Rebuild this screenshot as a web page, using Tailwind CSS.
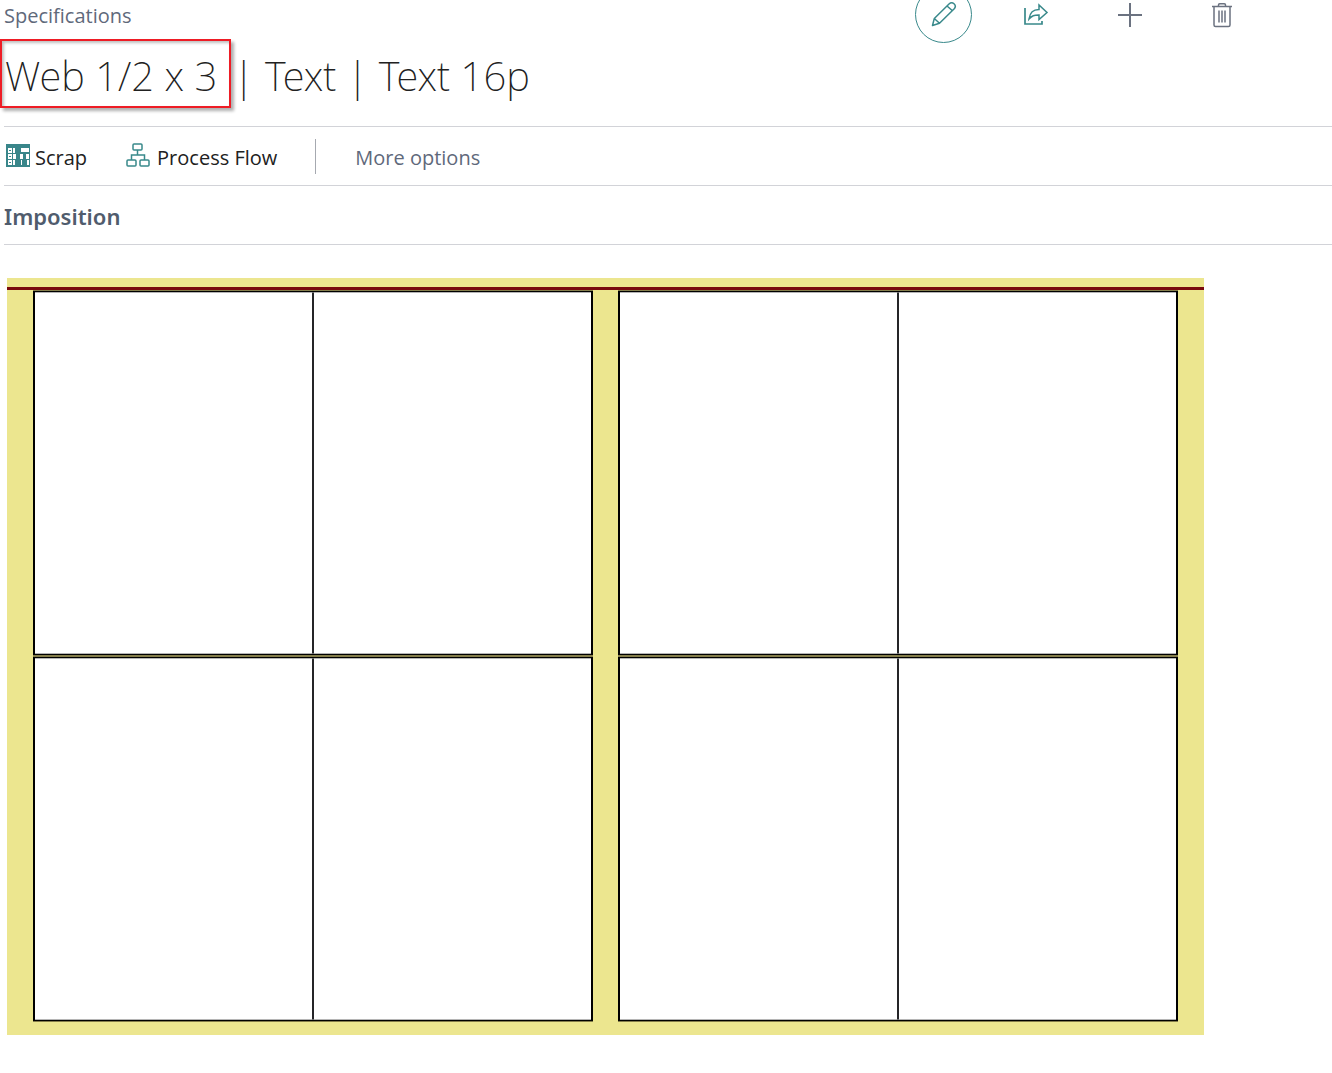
<!DOCTYPE html>
<html lang="en">
<head>
<meta charset="utf-8">
<meta name="viewport" content="width=device-width, initial-scale=1">
<title>Specifications</title>
<script src="https://cdn.jsdelivr.net/npm/@tailwindcss/browser@4"></script>
</head>
<body class="bg-white font-['Open_Sans','Noto_Sans',sans-serif] text-[#212121] overflow-x-hidden">
<header class="pl-1">
  <div class="flex h-8 items-center justify-between">
    <a href="#" class="text-[20px] leading-8 text-[#5f697b]">Specifications</a>
    <div class="mr-[98px] flex items-center">
      <button aria-label="Edit" class="-mt-1 mr-[51px] flex size-[57px] shrink-0 items-center justify-center rounded-full border border-[#39898b] text-[#39898b]">
        <svg class="size-[26px]" viewBox="0 0 26 26" fill="none" stroke="currentColor" stroke-width="1.5" stroke-linejoin="round"><path d="M1.500 24.500l1.800-7L18 3q2.600-2.400 5-.200t.500 4.700L8.500 22.300zM3.300 17.500l5.200 4.800M16 5l5.500 4.800"/></svg>
      </button>
      <button aria-label="Share" class="mr-[68px] text-[#39898b]">
        <svg class="mb-1 size-[26px]" viewBox="0 0 26 26" fill="none" stroke="currentColor" stroke-width="1.500"><path d="M2 7v16h17v-3" stroke-width="1.700"/><path d="M6 18c1-7 4-9.500 10-9.500V4l8 7.500-8 7V14c-5 0-7 .500-10 4z"/></svg>
      </button>
      <button aria-label="New" class="mr-[67px] text-[#6b7280]">
        <svg class="mb-0.5 size-[26px]" viewBox="0 0 26 26" fill="none" stroke="currentColor" stroke-width="2"><path d="M1 13h24M13 1v24"/></svg>
      </button>
      <button aria-label="Delete" class="text-[#6b7280]">
        <svg class="mb-0.5 h-[26px] w-[24px]" viewBox="0 0 24 26" fill="none" stroke="currentColor" stroke-width="1.500"><path d="M2 4.500h20M4 4.500V23q0 1.500 1.500 1.500h13q1.500 0 1.500-1.500V4.500M8.500 4.500V3q0-1.200 1.200-1.200h4.600q1.200 0 1.200 1.200v1.500M9 8.500v12M12 8.500v12M15 8.500v12"/></svg>
      </button>
    </div>
  </div>
  <h1 class="-ml-1 mt-[7px] flex h-[69px] items-center whitespace-pre font-['Noto_Sans','Open_Sans',sans-serif] text-[40px] font-extralight"><span class="flex h-full w-[231px] items-center border-2 border-[#ee1c25] pl-[3px] pt-1 shadow-[3px_3px_3px_#00000050,inset_2px_2px_3px_#00000040]">Web 1/2 x 3</span><span class="pl-0.5 pt-1">| Text | Text 16p</span></h1>
  <nav class="mt-[18px] flex h-[60px] items-center border-y border-[#d2d3d8] text-[20px]">
    <button class="flex items-center gap-[5px] pl-0.5">
      <svg class="mb-0.5 h-[23px] w-[24px]" viewBox="0 0 24 23"><path fill="#39868a" d="M0 0h24v23H0z"/><path fill="#fff" d="M2 4h4v5H2zM2 10h4v5H2zM2 16h4v5H2zM7 4h2v5H7zM7 10h3v5H7zM7 16h2v5H7zM15 4h8v4h-8zM14 10h3v5h-3zM20 10h3v5h-3zM15 16h1v5h-1zM21 16h2v5h-2z"/><path fill="#39868a" d="M3 6h2v1H3zM3 12h2v1H3zM3 18h2v1H3z"/></svg>
      <span class="pt-1">Scrap</span>
    </button>
    <button class="ml-[39px] flex items-center gap-[7px]">
      <svg class="mb-0.5 size-[24px]" viewBox="0 0 24 24" fill="none" stroke="#39898b" stroke-width="1.500"><rect x="7" y="1" width="9" height="6" rx="1"/><rect x="1" y="17" width="9" height="6" rx="1"/><rect x="14" y="17" width="9" height="6" rx="1"/><path d="M11.500 7v5M5.500 17v-5h13v5"/></svg>
      <span class="pt-1">Process Flow</span>
    </button>
    <span class="ml-[38px] h-[35px] w-px bg-[#a6a9b0]"></span>
    <button class="ml-[39px] pt-1 text-[#5f697b]">More options</button>
  </nav>
  <h2 class="flex h-[59px] items-center border-b border-[#d2d3d8] pt-0.5 font-['Noto_Sans','Open_Sans',sans-serif] text-[22px] font-semibold text-[#505c6d]">Imposition</h2>
</header>
<main class="ml-[7px] mr-32 mt-[33px] bg-[#ece68f]">
  <div class="h-[9px]"></div>
  <div class="h-[3px] bg-[#780a0d]"></div>
  <div class="grid grid-cols-2 gap-[25px] px-[26px] pb-[13px]">
    <div class="grid aspect-[560/732] grid-rows-2 gap-0.5 bg-[#857e4b] py-px">
      <div class="grid grid-cols-2 border-x-2 border-y border-black bg-white"><div class="border-y border-r border-y-[#b5b5b5] border-r-[#252528]"></div><div class="border-y border-l border-y-[#b5b5b5] border-l-[#252528]"></div></div>
      <div class="grid grid-cols-2 border-x-2 border-y border-black bg-white"><div class="border-y border-r border-y-[#b5b5b5] border-r-[#252528]"></div><div class="border-y border-l border-y-[#b5b5b5] border-l-[#252528]"></div></div>
    </div>
    <div class="grid aspect-[560/732] grid-rows-2 gap-0.5 bg-[#857e4b] py-px">
      <div class="grid grid-cols-2 border-x-2 border-y border-black bg-white"><div class="border-y border-r border-y-[#b5b5b5] border-r-[#252528]"></div><div class="border-y border-l border-y-[#b5b5b5] border-l-[#252528]"></div></div>
      <div class="grid grid-cols-2 border-x-2 border-y border-black bg-white"><div class="border-y border-r border-y-[#b5b5b5] border-r-[#252528]"></div><div class="border-y border-l border-y-[#b5b5b5] border-l-[#252528]"></div></div>
    </div>
  </div>
</main>
</body>
</html>
